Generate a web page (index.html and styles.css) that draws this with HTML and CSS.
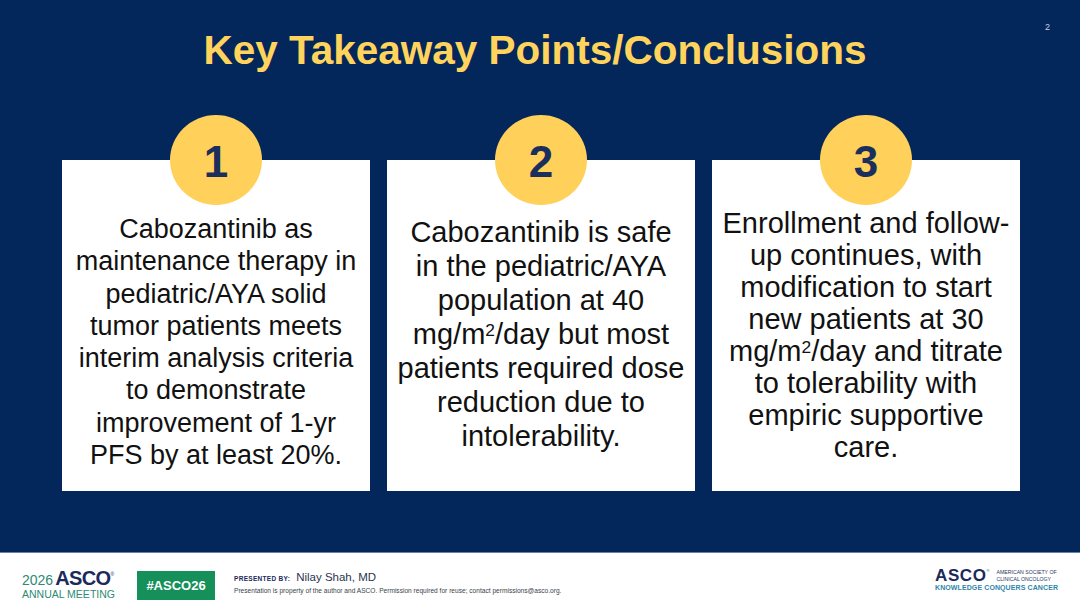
FILE: index.html
```html
<!DOCTYPE html>
<html lang="en">
<head>
<meta charset="utf-8">
<title>Key Takeaway Points/Conclusions</title>
<link rel="stylesheet" href="styles.css">
</head>
<body>
<div class="slide">
  <main class="main">
    <div class="page-num">2</div>
    <h1 class="title">Key Takeaway Points/Conclusions</h1>
    <div class="cards">
      <section class="card card-1">
        <div class="badge"><span>1</span></div>
        <p class="card-text">Cabozantinib as<br>maintenance therapy in<br>pediatric/AYA solid<br>tumor patients meets<br>interim analysis criteria<br>to demonstrate<br>improvement of 1-yr<br>PFS by at least 20%.</p>
      </section>
      <section class="card card-2">
        <div class="badge"><span>2</span></div>
        <p class="card-text">Cabozantinib is safe<br>in the pediatric/AYA<br>population at 40<br>mg/m<sup>2</sup>/day but most<br>patients required dose<br>reduction due to<br>intolerability.</p>
      </section>
      <section class="card card-3">
        <div class="badge"><span>3</span></div>
        <p class="card-text">Enrollment and follow-<br>up continues, with<br>modification to start<br>new patients at 30<br>mg/m<sup>2</sup>/day and titrate<br>to tolerability with<br>empiric supportive<br>care.</p>
      </section>
    </div>
  </main>
  <footer class="footer">
    <div class="meeting-logo">
      <div class="ml-top"><span class="ml-year">2026</span><span class="ml-asco">ASCO</span><span class="ml-reg">®</span></div>
      <div class="ml-bottom">ANNUAL MEETING</div>
    </div>
    <div class="hashtag">#ASCO26</div>
    <div class="presenter">
      <div class="pres-line"><span class="pres-label">PRESENTED BY:</span><span class="pres-name">Nilay Shah, MD</span></div>
      <div class="pres-note">Presentation is property of the author and ASCO. Permission required for reuse; contact permissions@asco.org.</div>
    </div>
    <div class="asco-logo">
      <div class="al-top">
        <span class="al-asco">ASCO</span><span class="al-reg">®</span>
        <span class="al-name">AMERICAN SOCIETY OF<br>CLINICAL ONCOLOGY</span>
      </div>
      <div class="al-tag">KNOWLEDGE CONQUERS CANCER</div>
    </div>
  </footer>
</div>
</body>
</html>
```
FILE: styles.css
```css
* { box-sizing: border-box; }
html, body { margin: 0; padding: 0; }
body {
  width: 1080px;
  height: 608px;
  overflow: hidden;
  font-family: "Liberation Sans", Arial, sans-serif;
  background: #ffffff;
}
.slide {
  width: 1080px;
  height: 608px;
  display: flex;
  flex-direction: column;
}
.main {
  position: relative;
  height: 553px;
  background: #03275b;
  border-bottom: 1px solid #6a80a6;
  padding-top: 30px;
}
.page-num {
  position: absolute;
  top: 22px;
  left: 1045px;
  font-size: 9px;
  color: #c9cfdb;
}
.title {
  margin: 0;
  padding-right: 10px;
  text-align: center;
  font-size: 40.5px;
  line-height: 40px;
  font-weight: 700;
  color: #ffd35c;
}
.cards {
  display: grid;
  grid-template-columns: 308px 308px 308px;
  column-gap: 17px;
  padding-left: 62px;
  margin-top: 90px;
}
.card {
  position: relative;
  height: 331px;
  background: #ffffff;
  text-align: center;
  color: #111111;
}
.badge {
  position: absolute;
  top: -45px;
  left: 50%;
  width: 92px;
  height: 90px;
  margin-left: -46px;
  border-radius: 50%;
  background: #ffd05a;
  display: flex;
  align-items: center;
  justify-content: center;
  padding-top: 4px;
}
.badge span {
  font-size: 44px;
  line-height: 44px;
  font-weight: 700;
  color: #1b2f5c;
}
.card-text {
  margin: 0;
  white-space: nowrap;
}
.card-1 .card-text {
  padding-top: 53px;
  font-size: 27px;
  line-height: 32.3px;
}
.card-2 .card-text {
  padding-top: 55px;
  font-size: 29px;
  line-height: 34px;
}
.card-3 .card-text {
  padding-top: 47px;
  font-size: 29px;
  line-height: 32px;
}
sup {
  font-size: 0.6em;
  line-height: 0;
  vertical-align: 0.45em;
}

/* footer */
.footer {
  flex: 1;
  display: flex;
  align-items: flex-start;
  padding-top: 17px;
  padding-left: 22px;
  padding-right: 23px;
  background: #ffffff;
}
.meeting-logo {
  width: 96px;
}
.ml-top {
  display: flex;
  align-items: baseline;
  height: 17px;
  line-height: 17px;
}
.ml-year {
  font-size: 14px;
  color: #2e8a74;
  margin-right: 2px;
}
.ml-asco {
  font-size: 20px;
  font-weight: 700;
  letter-spacing: -0.6px;
  color: #1b2a5a;
}
.ml-reg {
  font-size: 5px;
  align-self: flex-start;
  line-height: 8px;
  color: #1b2a5a;
}
.ml-bottom {
  margin-top: 2px;
  font-size: 10.5px;
  line-height: 11px;
  color: #2e8a74;
  white-space: nowrap;
}
.hashtag {
  margin-left: 19px;
  margin-top: 1px;
  width: 78px;
  height: 29px;
  background: #16905a;
  color: #ffffff;
  font-size: 13px;
  font-weight: 700;
  display: flex;
  align-items: center;
  justify-content: center;
}
.presenter {
  margin-left: 19px;
  margin-top: 1px;
  color: #2b3550;
}
.pres-line {
  display: flex;
  align-items: baseline;
  line-height: 13px;
}
.pres-label {
  font-size: 6.5px;
  font-weight: 700;
  letter-spacing: 0.3px;
  color: #1b2a5a;
  margin-right: 6px;
}
.pres-name {
  font-size: 11.5px;
  color: #2b3550;
}
.pres-note {
  margin-top: 1px;
  font-size: 6.6px;
  line-height: 9px;
  color: #3a3f4a;
  white-space: nowrap;
}
.asco-logo {
  margin-left: auto;
  margin-top: -2px;
  width: 122px;
}
.al-top {
  display: flex;
  align-items: flex-start;
  height: 15px;
}
.al-asco {
  font-size: 17px;
  line-height: 15px;
  font-weight: 700;
  letter-spacing: 0.6px;
  color: #1b2a5a;
}
.al-reg {
  font-size: 4px;
  line-height: 5px;
  color: #1b2a5a;
}
.al-name {
  margin-left: 7px;
  margin-top: 1px;
  font-size: 5.2px;
  line-height: 7px;
  color: #2a3560;
  white-space: nowrap;
}
.al-tag {
  margin-top: 1px;
  font-size: 7px;
  line-height: 8px;
  font-weight: 700;
  letter-spacing: 0.1px;
  color: #2f86a8;
  white-space: nowrap;
}
```
